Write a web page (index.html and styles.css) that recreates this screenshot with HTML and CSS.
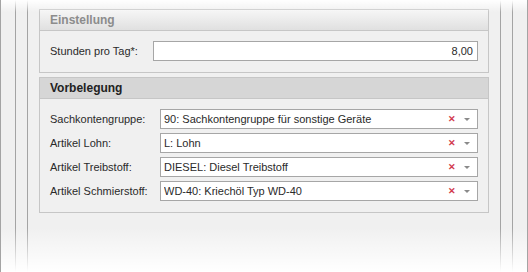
FILE: index.html
```html
<!DOCTYPE html>
<html lang="de">
<head>
    <meta charset="UTF-8">
    <title>Einstellung</title>
    <link rel="stylesheet" href="styles.css">
</head>
<body>
<div class="frame">
    <div class="frame-mid">
        <div class="frame-in">
            <div class="panel panel-off">
                <div class="panel-head">Einstellung</div>
                <div class="panel-body">
                    <div class="row row-wide">
                        <label>Stunden pro Tag*:</label>
                        <div class="field field-num">8,00</div>
                    </div>
                </div>
            </div>
            <div class="panel">
                <div class="panel-head">Vorbelegung</div>
                <div class="panel-body">
                    <div class="row">
                        <label>Sachkontengruppe:</label>
                        <div class="field combo"><span class="val">90: Sachkontengruppe für sonstige Geräte</span><span class="clear">&#x2715;</span><span class="arrow"></span></div>
                    </div>
                    <div class="row">
                        <label>Artikel Lohn:</label>
                        <div class="field combo"><span class="val">L: Lohn</span><span class="clear">&#x2715;</span><span class="arrow"></span></div>
                    </div>
                    <div class="row">
                        <label>Artikel Treibstoff:</label>
                        <div class="field combo"><span class="val">DIESEL: Diesel Treibstoff</span><span class="clear">&#x2715;</span><span class="arrow"></span></div>
                    </div>
                    <div class="row">
                        <label>Artikel Schmierstoff:</label>
                        <div class="field combo"><span class="val">WD-40: Kriechöl Typ WD-40</span><span class="clear">&#x2715;</span><span class="arrow"></span></div>
                    </div>
                </div>
            </div>
        </div>
    </div>
    <div class="fade-top"></div>
    <div class="fade-bottom"></div>
</div>
</body>
</html>
```

FILE: styles.css
```css
*{
    margin: 0;
    padding: 0;
    box-sizing: border-box;
}
body{
    width: 528px;
    height: 272px;
    overflow: hidden;
    background: #f0f0f0;
    font-family: "Liberation Sans", Arial, sans-serif;
    font-size: 11px;
    color: #2a2a2a;
}

.frame{
    position: relative;
    height: 272px;
    padding: 0 14px;
    border-left: 1px solid #a4a4a4;
    border-right: 1px solid #a4a4a4;
}
.frame-mid{
    height: 100%;
    padding: 0 11px;
    border-left: 1px solid #a4a4a4;
    border-right: 1px solid #a4a4a4;
}
.frame-in{
    height: 100%;
    padding: 9px 11px 0;
    border-left: 1px solid #a4a4a4;
    border-right: 1px solid #a4a4a4;
}

.fade-top{
    position: absolute;
    left: 0;
    right: 0;
    top: 0;
    height: 12px;
    background: linear-gradient(#ffffff, rgba(240, 240, 240, 0));
}
.fade-bottom{
    position: absolute;
    left: 0;
    right: 0;
    bottom: 0;
    height: 44px;
    background: linear-gradient(rgba(255, 255, 255, 0), #ffffff);
}

.panel{
    border: 1px solid #c6c6c6;
    margin-bottom: 4px;
}
.panel-head{
    height: 21px;
    line-height: 21px;
    padding: 0 10px;
    font-size: 12px;
    font-weight: bold;
    background: #d6d6d6;
    border-bottom: 1px solid #c6c6c6;
    color: #222;
}
.panel-off .panel-head{
    background: linear-gradient(#f6f6f6, #e0e0e0);
    color: #8c8c8c;
}
.panel-body{
    display: flex;
    flex-direction: column;
    gap: 4px;
    padding: 10px 10px 11px;
    background: #f0f0f0;
}

.row{
    display: grid;
    grid-template-columns: 110px 1fr;
    align-items: center;
}
.row-wide{
    grid-template-columns: 103px 1fr;
}
.row label{
    white-space: nowrap;
}

.field{
    height: 20px;
    line-height: 18px;
    padding: 0 4px 0 3px;
    background: #ffffff;
    border: 1px solid #a6a6a6;
}
.field-num{
    text-align: right;
}
.combo{
    display: flex;
    align-items: center;
}
.combo .val{
    flex: 1;
    white-space: nowrap;
    overflow: hidden;
}
.combo .clear{
    color: #d23a4e;
    font-size: 9px;
    font-weight: bold;
    margin-right: 8px;
}
.combo .arrow{
    width: 0;
    height: 0;
    border-left: 3px solid transparent;
    border-right: 3px solid transparent;
    border-top: 3px solid #8a8a8a;
    margin-right: 3px;
}
```
